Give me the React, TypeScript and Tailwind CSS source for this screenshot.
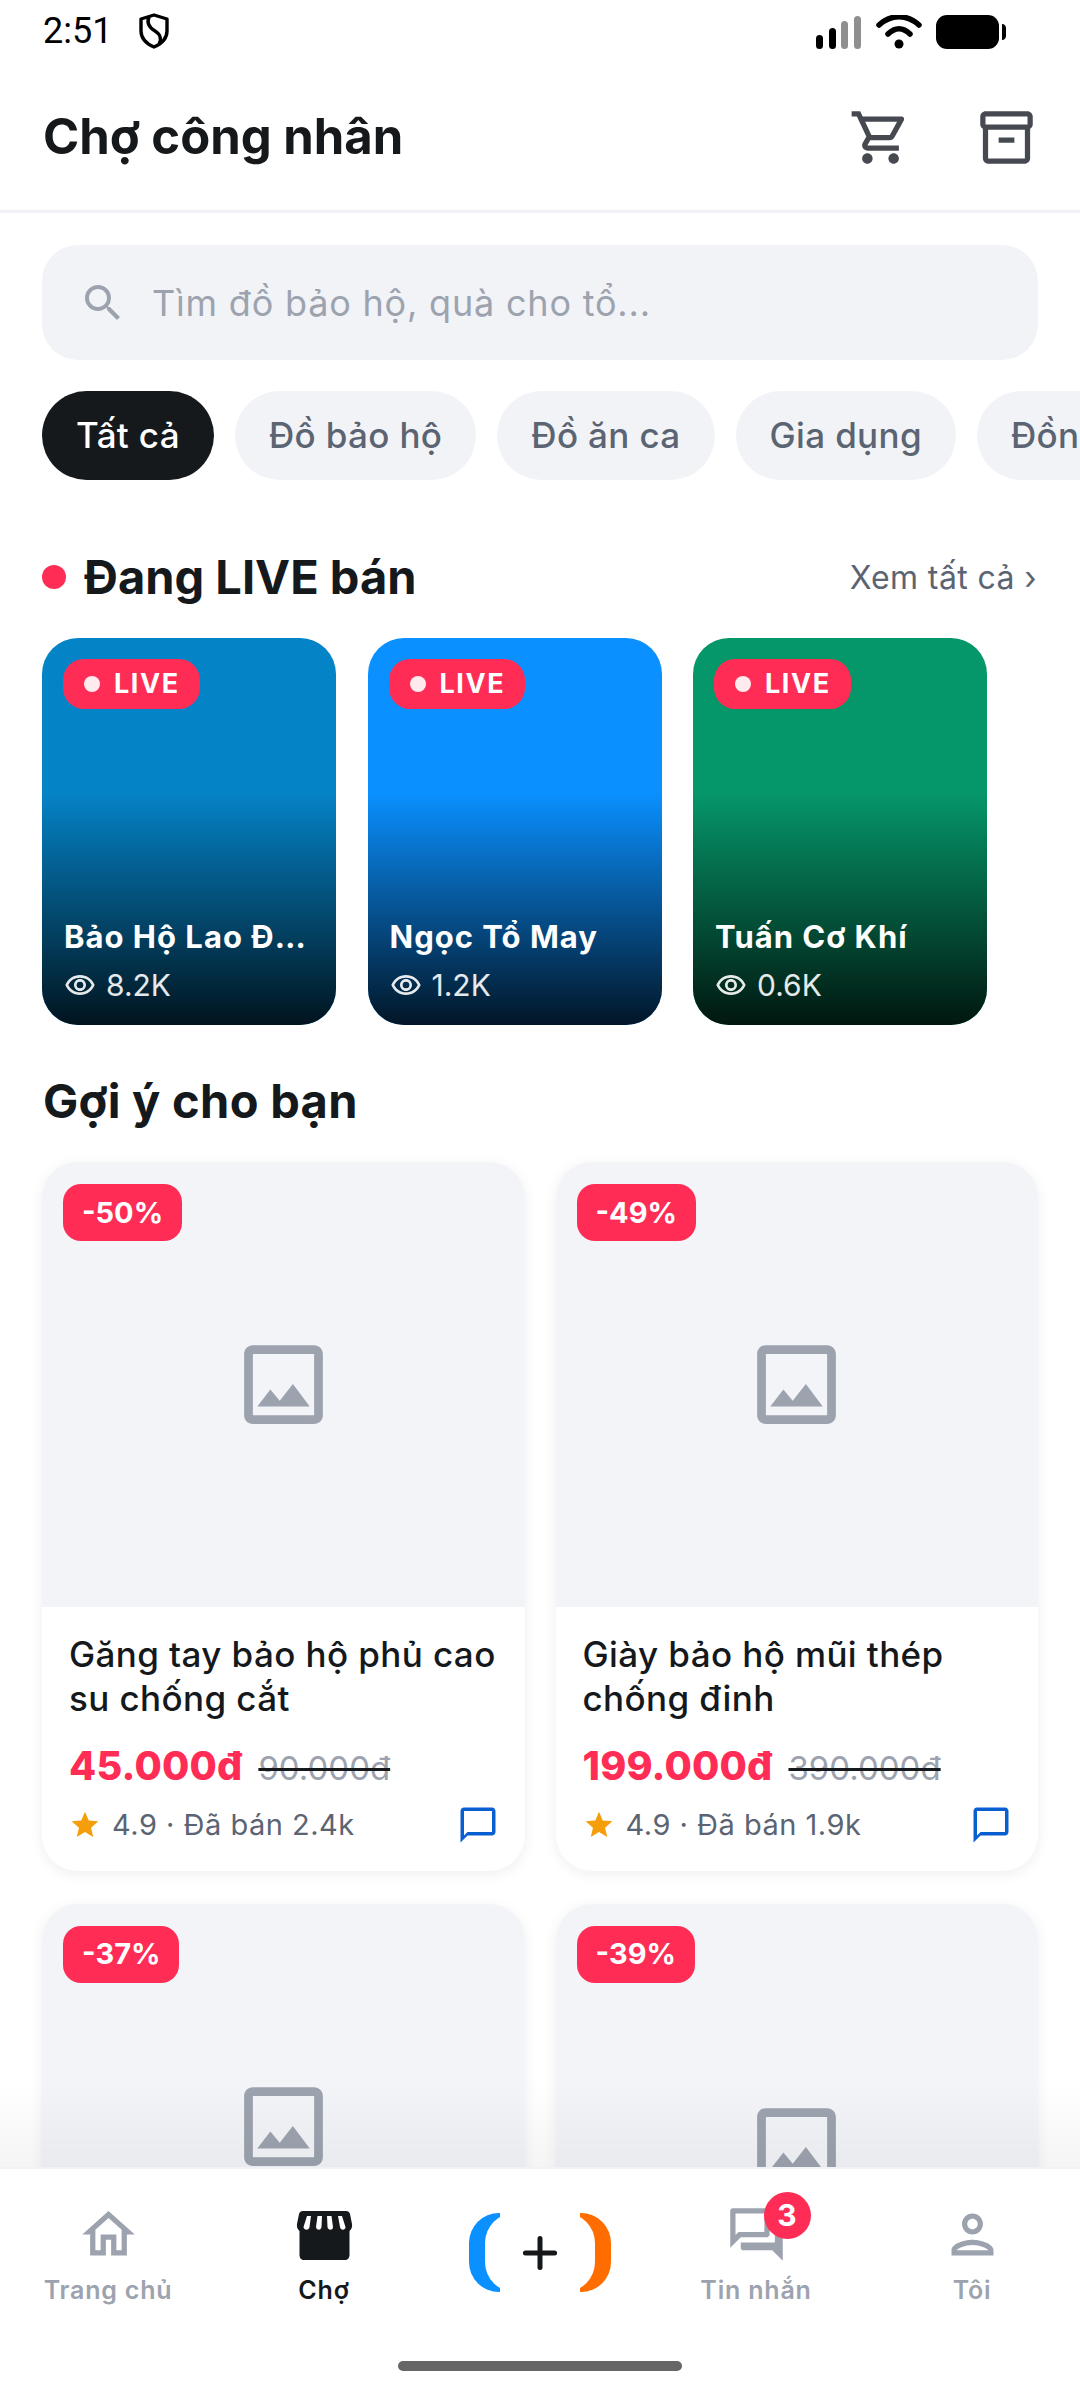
import { MdOutlineChatBubbleOutline, MdOutlineForum, MdOutlineHome, MdOutlineImage, MdOutlineInventory2, MdOutlinePerson, MdOutlineRemoveRedEye, MdOutlineShoppingCart, MdSearch, MdStar } from 'react-icons/md';
import { Plus } from 'lucide-react';

interface LiveShop {
  name: string;
  views: string;
  color: string;
}

interface Product {
  name: string;
  price: string;
  oldPrice: string;
  sold: string;
  discount: string;
  imageClass: string;
}

const chips = ['Tất cả', 'Đồ bảo hộ', 'Đồ ăn ca', 'Gia dụng', 'Đồng phục'];

const liveShops: LiveShop[] = [
  { name: 'Bảo Hộ Lao Động', views: '8.2K', color: 'bg-[#0583c7]' },
  { name: 'Ngọc Tổ May', views: '1.2K', color: 'bg-[#0a90ff]' },
  { name: 'Tuấn Cơ Khí', views: '0.6K', color: 'bg-[#059669]' },
];

const products: Product[] = [
  { name: 'Găng tay bảo hộ phủ cao su chống cắt', price: '45.000đ', oldPrice: '90.000đ', sold: '2.4k', discount: '-50%', imageClass: 'h-[445px]' },
  { name: 'Giày bảo hộ mũi thép chống đinh', price: '199.000đ', oldPrice: '390.000đ', sold: '1.9k', discount: '-49%', imageClass: 'h-[445px]' },
  { name: 'Áo phản quang công trường', price: '89.000đ', oldPrice: '140.000đ', sold: '1.2k', discount: '-37%', imageClass: 'h-[445px]' },
  { name: 'Mũ bảo hộ chịu lực cao', price: '110.000đ', oldPrice: '180.000đ', sold: '980', discount: '-39%', imageClass: 'h-[487px]' },
];

const StatusBar = () => (
  <div className="flex h-[60px] shrink-0 items-start justify-between pl-[43px] pr-[74px] pt-[10px]">
    <div className="flex items-center gap-[26px]">
      <span className="font-[Roboto,sans-serif] text-[36px] leading-[42px] text-black">2:51</span>
      <svg width="32" height="36" viewBox="0 0 32 36" fill="none" stroke="#000" strokeWidth="3.4" strokeLinejoin="round">
        <path d="M16 2 L29 6 V18 C29 26 23 31 16 34 C9 31 3 26 3 18 V6 Z" />
        <path d="M11 4 C8 11 12 15 17 18 C22 21 24 26 21 31" />
      </svg>
    </div>
    <svg className="mt-[5px]" width="191" height="36" viewBox="0 0 191 36">
      <rect x="1" y="20" width="7" height="14" rx="3.5" fill="#000" />
      <rect x="14" y="13" width="7" height="21" rx="3.5" fill="#000" />
      <rect x="26" y="6" width="7" height="28" rx="3.5" fill="#8f8f8f" />
      <rect x="39" y="1" width="7" height="33" rx="3.5" fill="#8f8f8f" />
      <path d="M64 10 C76 -1 92 -1 104 10" fill="none" stroke="#000" strokeWidth="5.5" strokeLinecap="round" />
      <path d="M73 19 C80 12 88 12 95 19" fill="none" stroke="#000" strokeWidth="5.5" strokeLinecap="round" />
      <circle cx="84" cy="29" r="4.5" fill="#000" />
      <rect x="121" y="0" width="63" height="34" rx="11" fill="#000" />
      <path d="M187 9 C189.500 9 191 11 191 13 V21 C191 23 189.500 25 187 25 Z" fill="#000" />
    </svg>
  </div>
);

const Header = () => (
  <div className="flex h-[153px] shrink-0 items-center justify-between border-b-[3px] border-[#f1f2f6] pl-[43px] pr-[42px] pt-[4px]">
    <h1 className="text-[49px] font-bold leading-[60px] text-[#15191c]">Chợ công nhân</h1>
    <div className="flex items-center gap-[63px] text-[#464a50]">
      <MdOutlineShoppingCart size={63} />
      <MdOutlineInventory2 size={63} />
    </div>
  </div>
);

const SearchBar = () => (
  <div className="mx-[42px] mt-[32px] flex h-[115px] items-center rounded-[36px] bg-[#f2f3f7] pl-[37px] text-[#9ca3af]">
    <MdSearch size={48} className="shrink-0" />
    <span className="ml-[25px] text-[36px] tracking-[0.8px]">Tìm đồ bảo hộ, quà cho tổ...</span>
  </div>
);

const ChipRow = () => (
  <div className="mt-[31px] flex gap-[21px] pl-[42px]">
    {chips.map((chip, index) => (
      <div
        key={chip}
        className={`flex h-[89px] shrink-0 items-center rounded-full px-[34px] text-[35px] font-medium tracking-[0.35px] ${
          index === 0 ? 'bg-[#15191c] text-white' : 'bg-[#f2f3f7] text-[#5b6472]'
        }`}
      >
        {chip}
      </div>
    ))}
  </div>
);

const LiveCard = ({ shop }: { shop: LiveShop }) => (
  <div className={`relative h-[387px] w-[294px] shrink-0 overflow-hidden rounded-[36px] ${shop.color}`}>
    <div className="absolute inset-x-0 bottom-0 h-[60%] bg-gradient-to-b from-transparent to-black/85" />
    <div className="absolute left-[21px] top-[21px] flex h-[50px] items-center gap-[14px] rounded-[21px] bg-[#ff2d55] pl-[21px] pr-[20px]">
      <span className="h-[16px] w-[16px] rounded-full bg-white/90" />
      <span className="text-[27px] font-bold tracking-[1.6px] text-white">LIVE</span>
    </div>
    <div className="absolute bottom-[18px] left-[22px] right-[21px]">
      <div className="truncate text-[31px] font-bold leading-[44px] tracking-[1px] text-white">{shop.name}</div>
      <div className="mt-[4px] flex items-center gap-[10px] text-[30px] leading-[44px] text-white/90">
        <MdOutlineRemoveRedEye size={32} />
        <span>{shop.views}</span>
      </div>
    </div>
  </div>
);

const ProductCard = ({ product }: { product: Product }) => (
  <div className="overflow-hidden rounded-[36px] bg-white shadow-[0_3px_14px_rgba(17,24,39,0.07)]">
    <div className={`relative flex items-center justify-center bg-[#f3f4f8] ${product.imageClass}`}>
      <span className="absolute left-[21px] top-[22px] flex h-[57px] items-center rounded-[18px] bg-[#ff2d55] px-[19px] text-[29px] font-bold text-white">
        {product.discount}
      </span>
      <MdOutlineImage size={105} className="text-[#9ca3af]" />
    </div>
    <div className="px-[27px] pb-[25px] pt-[25px]">
      <div className="mr-[-10px] h-[88px] text-[35px] font-medium leading-[44px] tracking-[0.4px] text-[#15191c]">{product.name}</div>
      <div className="mt-[21px] flex items-baseline gap-[16px]">
        <span className="text-[39.5px] font-extrabold leading-[50px] tracking-[0.2px] text-[#ff2d55]">{product.price}</span>
        <span className="text-[33px] text-[#9ca3af] line-through decoration-[#15191c] decoration-[3px]">{product.oldPrice}</span>
      </div>
      <div className="mt-[10px] flex items-center justify-between">
        <div className="flex items-center text-[29px] leading-[42px] tracking-[0.5px] text-[#5b6472]">
          <MdStar size={32} className="mr-[11px] text-[#f59e0b]" />
          4.9 · Đã bán {product.sold}
        </div>
        <MdOutlineChatBubbleOutline size={42} className="mr-[-1px] text-[#0a5fd0]" />
      </div>
    </div>
  </div>
);

const StoreIcon = () => (
  <svg width="63" height="63" viewBox="0 0 63 63">
    <path d="M10 8 H53 C55 8 56.500 9 57 11 L59 21 C59.500 24 58.500 26 56.500 28 V52 C56.500 55 54.500 57 52 57 H11 C8.500 57 6.500 55 6.500 52 V28 C4.500 26 3.500 24 4 21 L6 11 C6.500 9 8 8 10 8 Z" fill="#15191c" />
    <path d="M14 13 H18 L16.500 24 C16 27.500 11 27.500 10.500 24 Z M24.500 13 H29 L28.500 24 C28 27.500 23.500 27.500 23 24 Z M34 13 H38.500 L40 24 C40 27.500 35 27.500 34.500 24 Z M45 13 H49 L52.500 24 C52.500 27.500 47.500 27.500 47 24 Z" fill="#fff" />
  </svg>
);

const NavItem = ({ label, active, children }: { label: string; active?: boolean; children: React.ReactNode }) => (
  <div className={`flex flex-col items-center pt-[34px] ${active ? 'text-[#15191c]' : 'text-[#9ca3af]'}`}>
    {children}
    <span className="mt-[7px] text-[25px] font-semibold leading-[34px] tracking-[0.8px]">{label}</span>
  </div>
);

const BottomNav = () => (
  <div className="relative flex h-[233px] shrink-0 flex-col border-t-[2px] border-[#f1f2f6] bg-white">
    <div className="grid grid-cols-5">
      <NavItem label="Trang chủ">
        <MdOutlineHome size={63} />
      </NavItem>
      <NavItem label="Chợ" active>
        <StoreIcon />
      </NavItem>
      <div className="flex justify-center pt-[44px]">
        <div className="relative h-[79px] w-[142px]">
          <div className="absolute inset-y-0 left-0 w-[31px] rounded-l-[30px] bg-[#0a90ff]" />
          <div className="absolute inset-y-0 right-0 w-[31px] rounded-r-[30px] bg-[#ff6d00]" />
          <div className="absolute inset-y-0 inset-x-[16px] flex items-center justify-center rounded-[30px] bg-white text-[#15191c]">
            <Plus size={50} strokeWidth={2.4} />
          </div>
        </div>
      </div>
      <NavItem label="Tin nhắn">
        <div className="relative h-[63px] w-[63px]">
          <MdOutlineForum size={63} />
          <span className="absolute left-[39px] top-[-11px] flex h-[47px] w-[47px] items-center justify-center rounded-full bg-[#ff2d55] text-[30px] font-bold text-white">
            3
          </span>
        </div>
      </NavItem>
      <NavItem label="Tôi">
        <MdOutlinePerson size={63} />
      </NavItem>
    </div>
    <div className="mx-auto mb-[29px] mt-auto h-[10px] w-[284px] rounded-full bg-[#666666]" />
  </div>
);

export default function App() {
  return (
    <div className="flex h-[2400px] w-[1080px] flex-col overflow-hidden bg-white font-[Inter,sans-serif]">
      <StatusBar />
      <Header />
      <div className="relative min-h-0 flex-1 overflow-hidden">
        <SearchBar />
        <ChipRow />
        <div className="mt-[68px] flex h-[58px] items-center justify-between pl-[42px] pr-[43px]">
          <div className="flex items-center gap-[18px]">
            <span className="h-[24px] w-[24px] rounded-full bg-[#ff2d55]" />
            <h2 className="text-[47px] font-bold text-[#15191c]">Đang LIVE bán</h2>
          </div>
          <span className="mt-[2px] text-[32px] leading-[40px] tracking-[0.4px] text-[#5b6472]">Xem tất cả ›</span>
        </div>
        <div className="mt-[32px] flex gap-[31.5px] pl-[42px]">
          {liveShops.map((shop) => (
            <LiveCard key={shop.name} shop={shop} />
          ))}
        </div>
        <h2 className="mt-[47px] pl-[43px] text-[47px] font-bold leading-[58px] tracking-[0.3px] text-[#15191c]">Gợi ý cho bạn</h2>
        <div className="mt-[32px] grid grid-cols-2 items-start gap-x-[31px] gap-y-[33px] px-[42px]">
          {products.map((product) => (
            <ProductCard key={product.name} product={product} />
          ))}
        </div>
        <div className="absolute inset-x-0 bottom-0 h-[85px] bg-gradient-to-b from-transparent to-black/4" />
      </div>
      <BottomNav />
    </div>
  );
}
